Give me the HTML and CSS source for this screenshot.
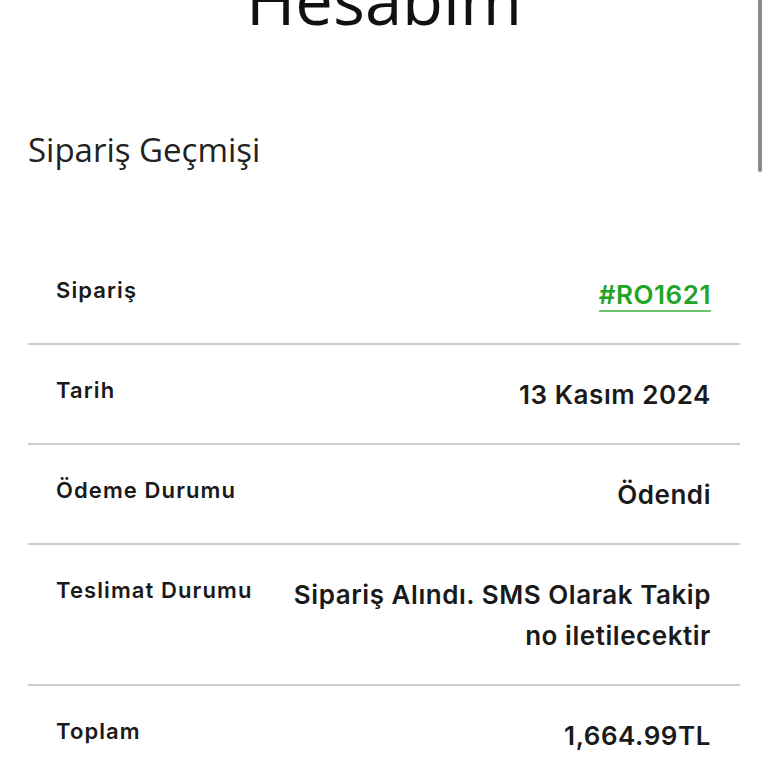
FILE: index.html
```html
<!DOCTYPE html>
<html lang="tr">
<head>
<meta charset="utf-8">
<title>Hesabım</title>
<link rel="stylesheet" href="styles.css">
</head>
<body>
<div class="page">
  <h1 class="title">Hesabım</h1>
  <h2 class="section-title">Sipariş Geçmişi</h2>
  <div class="order">
    <div class="row">
      <div class="label">Sipariş</div>
      <div class="value"><a class="order-link" href="#">#RO1621</a></div>
    </div>
    <div class="row">
      <div class="label">Tarih</div>
      <div class="value">13 Kasım 2024</div>
    </div>
    <div class="row">
      <div class="label">Ödeme Durumu</div>
      <div class="value">Ödendi</div>
    </div>
    <div class="row">
      <div class="label">Teslimat Durumu</div>
      <div class="value">Sipariş Alındı. SMS Olarak Takip no iletilecektir</div>
    </div>
    <div class="row">
      <div class="label">Toplam</div>
      <div class="value">1,664.99TL</div>
    </div>
  </div>
</div>
<div class="scrollbar"></div>
</body>
</html>
```
FILE: styles.css
```css
html, body {
  margin: 0;
  padding: 0;
  background: #ffffff;
  overflow: hidden;
}
body {
  color: #1c1c1c;
  font-family: "Open Sans", "Noto Sans", sans-serif;
}
.page {
  padding: 0 28px;
}
.title {
  margin: -34px 0 0;
  font-family: "Open Sans", sans-serif;
  font-weight: 400;
  font-size: 67px;
  line-height: 66px;
  text-align: center;
  color: #111;
}
.section-title {
  margin: 98px 0 0;
  font-family: "Open Sans", sans-serif;
  font-weight: 400;
  font-size: 33px;
  line-height: 40px;
  color: #222;
}
.order {
  margin-top: 75px;
}
.row {
  display: flex;
  justify-content: space-between;
  align-items: flex-start;
  gap: 34px;
  padding: 0 29px 0 28px;
  border-bottom: 2px solid #cdcdcd;
}
.row:last-child {
  border-bottom: none;
}
.label {
  flex: 0 0 auto;
  font-family: "Inter", sans-serif;
  font-weight: 600;
  font-size: 22px;
  line-height: 41px;
  padding: 25px 0 28px;
  color: #1a1a1a;
  letter-spacing: 1.1px;
}
.value {
  flex: 1 1 auto;
  text-align: right;
  font-family: "Inter", sans-serif;
  font-weight: 600;
  font-size: 26px;
  line-height: 41px;
  padding: 29px 0 28px;
  color: #1a1a1a;
  letter-spacing: 0.55px;
}
.order-link {
  color: #22a524;
  text-decoration: none;
  border-bottom: 2px solid #6cc46c;
}
.scrollbar {
  position: fixed;
  top: 0;
  right: 6px;
  width: 4px;
  height: 172px;
  background: #8a8a8a;
  border-radius: 0 0 2px 2px;
}
```
